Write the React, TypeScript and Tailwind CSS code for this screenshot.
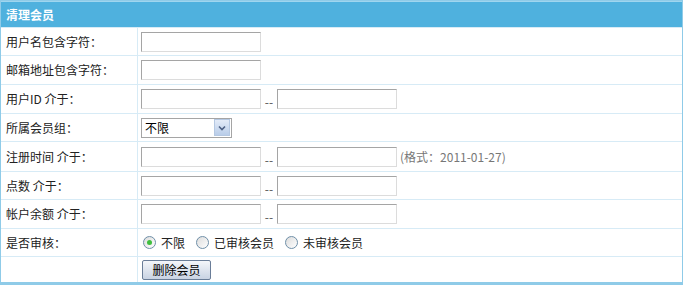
const rowCls = 'grid grid-cols-[137px_1fr] border-t border-[#d7ebf6]';
const labelCls = 'flex items-center pl-[5px] border-r border-[#d7ebf6] text-[12px] text-[#222]';
const cellCls = 'flex items-center pl-[3px] text-[12px] text-[#222]';

function TextBox() {
  return (
    <input
      type="text"
      className="w-[120px] h-[20px] border border-[#a5a5a5] border-r-[#dcdcdc] border-b-[#dcdcdc] bg-white outline-none"
    />
  );
}

function Range({ hint }: { hint?: string }) {
  return (
    <div className="flex items-center">
      <TextBox />
      <span className="w-[16px] text-center text-[12px] leading-none pt-[6px] text-[#555]">--</span>
      <TextBox />
      {hint && <span className="ml-[3px] text-[#777]">{hint}</span>}
    </div>
  );
}

function Radio({ checked, label }: { checked?: boolean; label: string }) {
  return (
    <label className="flex items-center mr-[11px]">
      <span className="w-[13px] h-[13px] rounded-full border border-[#6f8fa8] bg-gradient-to-br from-[#dcdcdc] to-white flex items-center justify-center">
        {checked && <span className="w-[5px] h-[5px] rounded-full bg-[#3fbf3f]" />}
      </span>
      <span className="ml-[5px]">{label}</span>
    </label>
  );
}

export default function App() {
  return (
    <div
      className="w-[686px] h-[286px] bg-white"
      style={{ fontFamily: '"Noto Sans CJK SC", "Noto Sans", sans-serif' }}
    >
      <div className="w-[683px] border border-[#8fcbe8] border-b-[3px] border-b-[#8fcbe8]">
        <div className="h-[26px] bg-[#4fb1de] border-t border-[#9fd6ef] flex items-center pl-[5px] text-[12px] font-bold text-white">
          清理会员
        </div>
        <div className={rowCls + ' h-[28px]'}>
          <div className={labelCls}>用户名包含字符：</div>
          <div className={cellCls}><TextBox /></div>
        </div>
        <div className={rowCls + ' h-[29px]'}>
          <div className={labelCls}>邮箱地址包含字符：</div>
          <div className={cellCls}><TextBox /></div>
        </div>
        <div className={rowCls + ' h-[29px]'}>
          <div className={labelCls}>用户ID 介于：</div>
          <div className={cellCls}><Range /></div>
        </div>
        <div className={rowCls + ' h-[28px]'}>
          <div className={labelCls}>所属会员组：</div>
          <div className={cellCls}>
            <div className="w-[91px] h-[20px] border border-[#a5a5a5] flex items-center bg-white">
              <span className="flex-1 pl-[3px] text-[12px] text-black">不限</span>
              <span className="w-[16px] h-[17px] mr-[1px] border border-[#b5c8e2] bg-gradient-to-b from-[#e3ebf8] to-[#b9cde9] flex items-center justify-center">
                <svg width="8" height="6" viewBox="0 0 8 6">
                  <path d="M1 1.5 L4 4.5 L7 1.5" fill="none" stroke="#4d6185" strokeWidth="1.6" />
                </svg>
              </span>
            </div>
          </div>
        </div>
        <div className={rowCls + ' h-[30px]'}>
          <div className={labelCls}>注册时间 介于：</div>
          <div className={cellCls}><Range hint="(格式：2011-01-27)" /></div>
        </div>
        <div className={rowCls + ' h-[28px]'}>
          <div className={labelCls}>点数 介于：</div>
          <div className={cellCls}><Range /></div>
        </div>
        <div className={rowCls + ' h-[29px]'}>
          <div className={labelCls}>帐户余额 介于：</div>
          <div className={cellCls}><Range /></div>
        </div>
        <div className={rowCls + ' h-[28px]'}>
          <div className={labelCls}>是否审核：</div>
          <div className={cellCls + ' pl-[5px]'}>
            <Radio checked label="不限" />
            <Radio label="已审核会员" />
            <Radio label="未审核会员" />
          </div>
        </div>
        <div className={rowCls + ' h-[26px]'}>
          <div className={labelCls}></div>
          <div className={cellCls + ' pl-[4px]'}>
            <button className="w-[69px] h-[20px] border border-[#6a7d98] rounded-[2px] bg-gradient-to-b from-[#f4f6fa] to-[#c9d3e3] text-[12px] text-black leading-none">
              删除会员
            </button>
          </div>
        </div>
      </div>
    </div>
  );
}
